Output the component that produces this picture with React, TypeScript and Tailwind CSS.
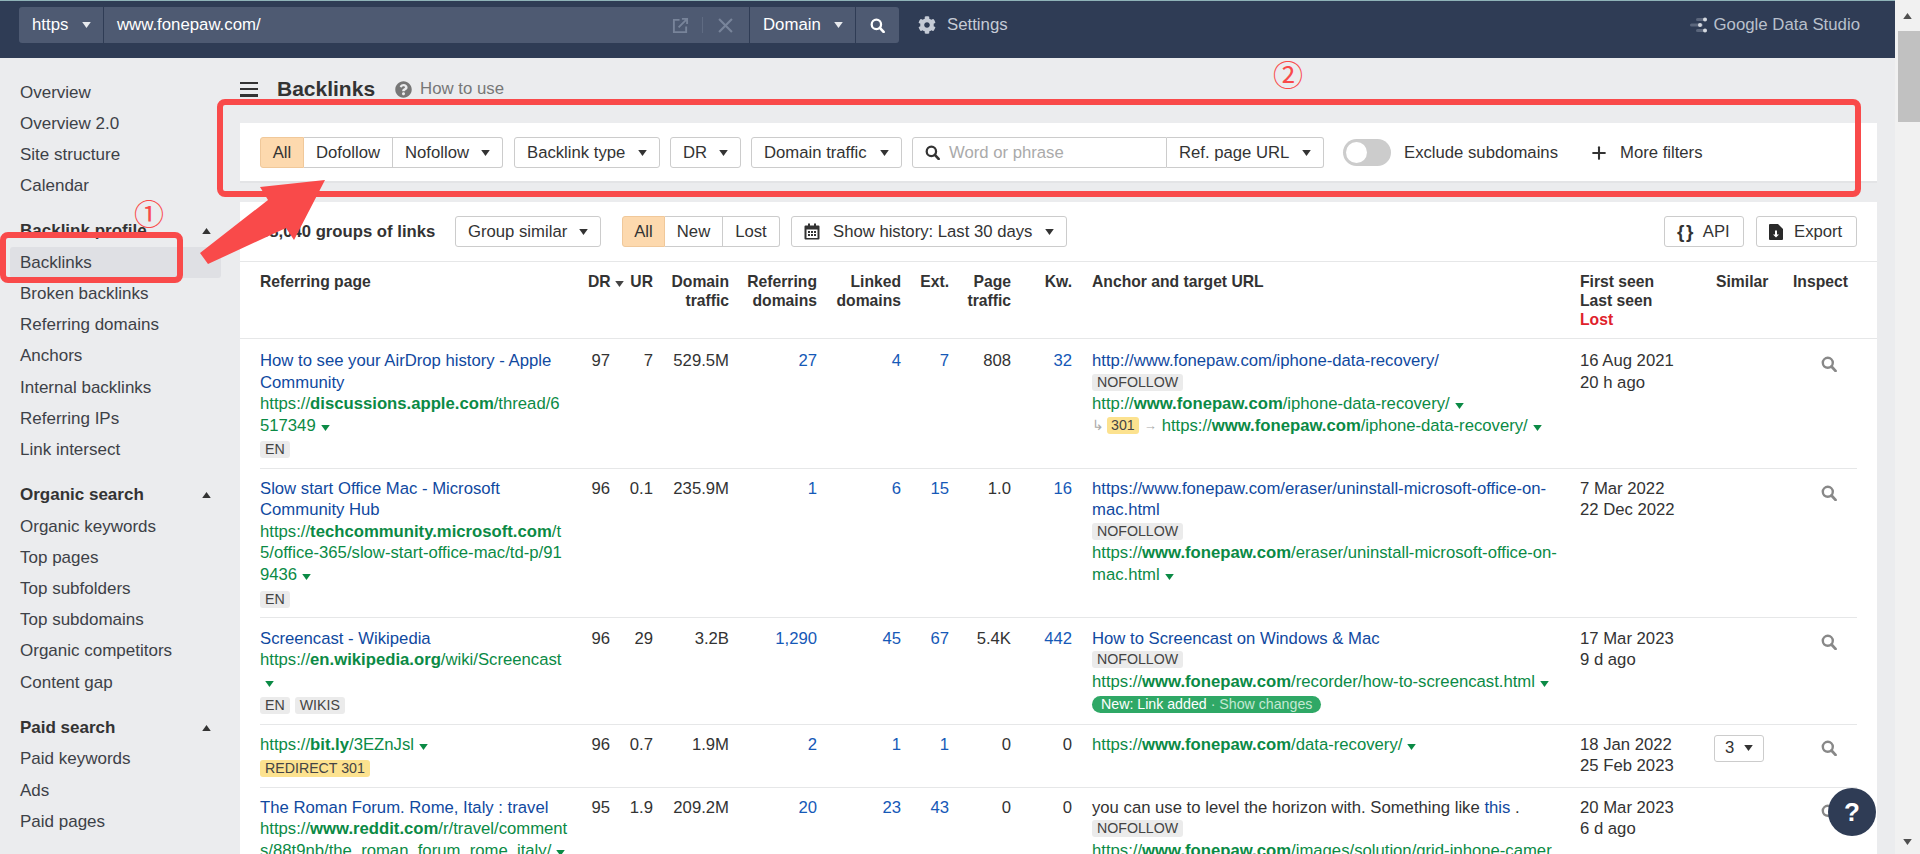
import type { ReactNode } from 'react'
import { FaCog, FaQuestionCircle } from 'react-icons/fa'
import { Plus } from 'lucide-react'

function Caret({ className = 'text-[#333]' }: { className?: string }) {
  return (
    <svg viewBox="0 0 10 7" className={`inline-block w-[9px] h-[6px] shrink-0 ${className}`}>
      <path d="M0 0h10L5 7z" fill="currentColor" />
    </svg>
  )
}

function SearchIcon({ className = '' }: { className?: string }) {
  return (
    <svg viewBox="0 0 16 16" className={className} fill="none" stroke="currentColor">
      <circle cx="6.8" cy="6.8" r="5" strokeWidth="2.4" />
      <path d="M10.5 10.5l4 4.4" strokeWidth="2.8" strokeLinecap="round" />
    </svg>
  )
}

function Btn({ w, children, className = '' }: { w: string; children: ReactNode; className?: string }) {
  return (
    <div className={`${w} h-[31px] flex items-center justify-between px-3 border border-[#ccc] rounded-[3px] bg-white shrink-0 ${className}`}>
      {children}
    </div>
  )
}

function Tag({ children, className = 'bg-[#ebebeb] text-[#444]' }: { children: ReactNode; className?: string }) {
  return (
    <span className={`inline-block h-[17px] leading-[17px] px-[5px] rounded-[3px] text-[14.2px] ${className}`}>
      {children}
    </span>
  )
}

function Url({ pre, bold, post }: { pre: string; bold: string; post: string }) {
  return (
    <span className="text-[#0b8a45]">
      {pre}
      <b>{bold}</b>
      {post}
      <Caret className="text-[#0b8a45] ml-[5px] align-[0px]" />
    </span>
  )
}

const blue = 'text-[#10499f]'

function Cols() {
  return (
    <colgroup>
      <col className="w-[320px]" />
      <col className="w-[44px]" />
      <col className="w-[29px]" />
      <col className="w-[76px]" />
      <col className="w-[88px]" />
      <col className="w-[84px]" />
      <col className="w-[48px]" />
      <col className="w-[62px]" />
      <col className="w-[61px]" />
      <col className="w-[508px]" />
      <col className="w-[136px]" />
      <col className="w-[77px]" />
      <col className="w-[64px]" />
    </colgroup>
  )
}

type Row = {
  h: string
  pt: string
  ipt: string
  page: ReactNode
  dr: string
  nums: [string, boolean][]
  anchor: ReactNode
  first: string
  last: string
  similar?: boolean
}

const rows: Row[] = [
  {
    h: 'h-[129px]',
    pt: 'pt-[11px]',
    ipt: 'pt-[17px]',
    page: (
      <>
        <div className={blue}>How to see your AirDrop history - Apple Community</div>
        <div className="break-all"><Url pre="https://" bold="discussions.apple.com" post="/thread/6517349" /></div>
        <div className="mt-[5px] leading-[17px] flex"><Tag>EN</Tag></div>
      </>
    ),
    dr: '97',
    nums: [['7', false], ['529.5M', false], ['27', true], ['4', true], ['7', true], ['808', false], ['32', true]],
    anchor: (
      <>
        <div className={blue}>http://www.fonepaw.com/iphone-data-recovery/</div>
        <div className="flex h-[21.6px] items-center"><Tag>NOFOLLOW</Tag></div>
        <Url pre="http://" bold="www.fonepaw.com" post="/iphone-data-recovery/" />
        <div className="flex items-center">
          <span className="text-[#aaa] text-[14px] w-[15px]">↳</span>
          <Tag className="bg-[#fce28f] text-[#444] !px-[4px]">301</Tag>
          <span className="text-[#aaa] text-[13px] mx-[5px]">→</span>
          <Url pre="https://" bold="www.fonepaw.com" post="/iphone-data-recovery/" />
        </div>
      </>
    ),
    first: '16 Aug 2021',
    last: '20 h ago',
  },
  {
    h: 'h-[149px]',
    pt: 'pt-[9px]',
    ipt: 'pt-[16px]',
    page: (
      <>
        <div className={blue}>Slow start Office Mac - Microsoft Community Hub</div>
        <div className="break-all"><Url pre="https://" bold="techcommunity.microsoft.com" post="/t5/office-365/slow-start-office-mac/td-p/919436" /></div>
        <div className="mt-[6px] leading-[17px] flex"><Tag>EN</Tag></div>
      </>
    ),
    dr: '96',
    nums: [['0.1', false], ['235.9M', false], ['1', true], ['6', true], ['15', true], ['1.0', false], ['16', true]],
    anchor: (
      <>
        <div className={blue}>https://www.fonepaw.com/eraser/uninstall-microsoft-office-on-mac.html</div>
        <div className="flex h-[21.6px] items-center"><Tag>NOFOLLOW</Tag></div>
        <Url pre="https://" bold="www.fonepaw.com" post="/eraser/uninstall-microsoft-office-on-mac.html" />
      </>
    ),
    first: '7 Mar 2022',
    last: '22 Dec 2022',
  },
  {
    h: 'h-[107px]',
    pt: 'pt-[10px]',
    ipt: 'pt-[16px]',
    page: (
      <>
        <div className={blue}>Screencast - Wikipedia</div>
        <div className="break-all"><Url pre="https://" bold="en.wikipedia.org" post="/wiki/Screencast" /></div>
        <div className="mt-[5px] leading-[17px] flex gap-[5px]"><Tag>EN</Tag><Tag>WIKIS</Tag></div>
      </>
    ),
    dr: '96',
    nums: [['29', false], ['3.2B', false], ['1,290', true], ['45', true], ['67', true], ['5.4K', false], ['442', true]],
    anchor: (
      <>
        <div className={blue}>How to Screencast on Windows &amp; Mac</div>
        <div className="flex h-[21.6px] items-center"><Tag>NOFOLLOW</Tag></div>
        <Url pre="https://" bold="www.fonepaw.com" post="/recorder/how-to-screencast.html" />
        <div className="mt-[4px] flex">
          <span className="h-[17px] leading-[17px] px-[9px] rounded-full bg-[#2fa866] text-white text-[14.2px]">
            New: Link added <span className="text-[#c4e8d3]">· Show changes</span>
          </span>
        </div>
      </>
    ),
    first: '17 Mar 2023',
    last: '9 d ago',
  },
  {
    h: 'h-[63px]',
    pt: 'pt-[9px]',
    ipt: 'pt-[15px]',
    page: (
      <>
        <div className="break-all"><Url pre="https://" bold="bit.ly" post="/3EZnJsl" /></div>
        <div className="mt-[5px] leading-[17px] flex"><Tag className="bg-[#fce28f] text-[#444]">REDIRECT 301</Tag></div>
      </>
    ),
    dr: '96',
    nums: [['0.7', false], ['1.9M', false], ['2', true], ['1', true], ['1', true], ['0', false], ['0', false]],
    anchor: <Url pre="https://" bold="www.fonepaw.com" post="/data-recovery/" />,
    first: '18 Jan 2022',
    last: '25 Feb 2023',
    similar: true,
  },
  {
    h: 'h-[120px]',
    pt: 'pt-[9px]',
    ipt: 'pt-[16px]',
    page: (
      <>
        <div className={blue}>The Roman Forum. Rome, Italy : travel</div>
        <div className="break-all"><Url pre="https://" bold="www.reddit.com" post="/r/travel/comments/88t9nb/the_roman_forum_rome_italy/" /></div>
      </>
    ),
    dr: '95',
    nums: [['1.9', false], ['209.2M', false], ['20', true], ['23', true], ['43', true], ['0', false], ['0', false]],
    anchor: (
      <>
        <div>you can use to level the horizon with. Something like <span className={blue}>this</span> .</div>
        <div className="flex h-[21.6px] items-center"><Tag>NOFOLLOW</Tag></div>
        <div className="break-all pr-[12px]"><Url pre="https://" bold="www.fonepaw.com" post="/images/solution/grid-iphone-camera.jpg" /></div>
      </>
    ),
    first: '20 Mar 2023',
    last: '6 d ago',
  },
]

const menu: { title?: string; items: string[] }[] = [
  { items: ['Overview', 'Overview 2.0', 'Site structure', 'Calendar'] },
  {
    title: 'Backlink profile',
    items: ['Backlinks', 'Broken backlinks', 'Referring domains', 'Anchors', 'Internal backlinks', 'Referring IPs', 'Link intersect'],
  },
  {
    title: 'Organic search',
    items: ['Organic keywords', 'Top pages', 'Top subfolders', 'Top subdomains', 'Organic competitors', 'Content gap'],
  },
  { title: 'Paid search', items: ['Paid keywords', 'Ads', 'Paid pages'] },
]

function Sidebar() {
  return (
    <nav className="w-[240px] shrink-0 pt-[18.5px] pl-[10px] pr-[19px] text-[17px] text-[#3d4147]">
      {menu.map((group, i) => (
        <div key={i} className={i ? 'mt-[14.4px]' : ''}>
          {group.title && (
            <div className="h-[31.2px] flex items-center justify-between px-[10px] font-bold text-[#333]">
              {group.title}
              <Caret className="text-[#333] rotate-180 mr-0" />
            </div>
          )}
          {group.items.map((item) => (
            <div
              key={item}
              className={`h-[31.2px] leading-[31px] px-[10px] rounded-[3px] ${item === 'Backlinks' ? 'bg-[#dfe0e4]' : ''}`}
            >
              {item}
            </div>
          ))}
        </div>
      ))}
    </nav>
  )
}

function TopBar() {
  return (
    <header className="h-[58px] shrink-0 bg-[#2f3c55] border-t border-[#8fb3b8] flex items-start pl-[19px] pr-[35px] pt-[6px] text-[16.8px]">
      <div className="flex h-[36px] w-[880px] rounded-[3px] overflow-hidden text-white bg-[#2f3c55] gap-[1px]">
        <div className="w-[84px] bg-[#4e5a72] flex items-center justify-between pl-[13px] pr-[12px]">
          https <Caret className="text-[#e8eaee]" />
        </div>
        <div className="flex-1 bg-[#4e5a72] flex items-center pl-[13px] pr-[16px]">
          <span className="flex-1">www.fonepaw.com/</span>
          <svg viewBox="0 0 18 18" className="w-[17px] h-[17px] text-[#78849a]" fill="none" stroke="currentColor" strokeWidth="2">
            <path d="M8 3H2v13h13v-6M7 11L16 2M10.5 2H16v5.5" />
          </svg>
          <span className="w-[1px] h-[16px] bg-[#5f6b82] ml-[13px] mr-[15px]" />
          <svg viewBox="0 0 14 14" className="w-[15px] h-[15px] text-[#78849a]" fill="none" stroke="currentColor" strokeWidth="2">
            <path d="M1 1l12 12M13 1L1 13" />
          </svg>
        </div>
        <div className="w-[105px] bg-[#4e5a72] flex items-center justify-between pl-[13px] pr-[12px]">
          Domain <Caret className="text-[#e8eaee]" />
        </div>
        <div className="w-[43px] bg-[#4e5a72] flex items-center justify-center">
          <SearchIcon className="w-[15px] h-[15px] text-white" />
        </div>
      </div>
      <div className="h-[36px] flex items-center ml-[19px] gap-[11px] text-[#c5cbd6]">
        <FaCog className="w-[18px] h-[18px]" />
        Settings
      </div>
      <div className="h-[36px] flex items-center ml-auto gap-[7px] text-[#b9c0cc]">
        <svg viewBox="0 0 17 16" className="w-[17px] h-[16px]">
          <rect x="6" y="1" width="11" height="3" rx="1.5" fill="#5b667c" />
          <circle cx="15" cy="2.5" r="2" fill="#d5d9e0" />
          <rect x="0" y="6.5" width="13" height="3" rx="1.5" fill="#5b667c" />
          <circle cx="10" cy="8" r="2" fill="#d5d9e0" />
          <rect x="6" y="12" width="11" height="3" rx="1.5" fill="#5b667c" />
          <circle cx="15" cy="13.5" r="2" fill="#d5d9e0" />
        </svg>
        Google Data Studio
      </div>
    </header>
  )
}

function FilterPanel() {
  return (
    <section className="h-[60px] bg-white border-b-2 border-[#e3e4e6] flex items-center pl-[20px] pt-[1px] text-[16.7px] text-[#333]">
      <div className="flex items-center">
        <div className="w-[44px] h-[31px] flex items-center justify-center bg-[#fdd9ae] border border-[#f0c89a] rounded-l-[3px]">All</div>
        <div className="w-[89px] h-[31px] flex items-center justify-center border-y border-r border-[#ccc]">Dofollow</div>
        <div className="w-[110px] h-[31px] flex items-center justify-between px-3 border-y border-r border-[#ccc] rounded-r-[3px]">
          Nofollow <Caret />
        </div>
      </div>
      <Btn w="w-[146px]" className="ml-[11px]">Backlink type <Caret /></Btn>
      <Btn w="w-[71px]" className="ml-[10px]">DR <Caret /></Btn>
      <Btn w="w-[151px]" className="ml-[10px]">Domain traffic <Caret /></Btn>
      <div className="ml-[10px] flex">
        <div className="w-[255px] h-[31px] flex items-center pl-[12px] border border-[#ccc] rounded-l-[3px] text-[#aaa]">
          <SearchIcon className="w-[15px] h-[15px] text-[#333] mr-[9px]" />
          Word or phrase
        </div>
        <div className="w-[157px] h-[31px] flex items-center justify-between px-3 border-y border-r border-[#ccc] rounded-r-[3px]">
          Ref. page URL <Caret />
        </div>
      </div>
      <div className="ml-[19px] w-[48px] h-[27px] rounded-full bg-[#ccc] flex items-center pl-[3px]">
        <span className="w-[21px] h-[21px] rounded-full bg-white" />
      </div>
      <span className="ml-[13px]">Exclude subdomains</span>
      <Plus className="ml-[31px] w-[20px] h-[20px] text-[#333]" strokeWidth={2.5} />
      <span className="ml-[11px]">More filters</span>
    </section>
  )
}

function Toolbar() {
  return (
    <div className="h-[60px] border-b border-[#e6e7e8] flex items-start pt-[14px] px-[20px] text-[16.7px] text-[#333]">
      <b className="w-[195px] h-[31px] leading-[31px] shrink-0">38,040 groups of links</b>
      <Btn w="w-[146px]">Group similar <Caret /></Btn>
      <div className="ml-[21px] flex">
        <div className="w-[43px] h-[31px] flex items-center justify-center bg-[#fdd9ae] border border-[#f0c89a] rounded-l-[3px]">All</div>
        <div className="w-[58px] h-[31px] flex items-center justify-center border-y border-r border-[#ccc]">New</div>
        <div className="w-[57px] h-[31px] flex items-center justify-center border-y border-r border-[#ccc] rounded-r-[3px]">Lost</div>
      </div>
      <Btn w="w-[276px]" className="ml-[11px]">
        <svg viewBox="0 0 16 17" className="w-[16px] h-[17px] text-[#333]">
          <path fill="currentColor" d="M1.500 2.500h2.500V0.500h2v2h4V0.500h2v2h2.500a1 1 0 011 1v12a1 1 0 01-1 1h-13a1 1 0 01-1-1v-12a1 1 0 011-1z" />
          <path fill="#fff" d="M2.500 6.500h11v8.500h-11z" />
          <path fill="currentColor" d="M4 8h2v2H4zM7 8h2v2H7zM10 8h2v2h-2zM4 11h2v2H4zM7 11h2v2H7zM10 11h2v2h-2z" />
        </svg>
        <span className="ml-[13px] flex-1">Show history: Last 30 days</span>
        <Caret />
      </Btn>
      <div className="ml-auto flex gap-[12px]">
        <Btn w="w-[80px]" className="!justify-start">
          <b className="text-[19px] tracking-[1.5px] mr-[8px] leading-none">{'{}'}</b>API
        </Btn>
        <Btn w="w-[101px]" className="!justify-start">
          <svg viewBox="0 0 14 16" className="w-[14px] h-[16px] mr-[11px] shrink-0 text-[#2a2a2a]">
            <path fill="currentColor" d="M1 0h8l5 5v10a1 1 0 01-1 1H1a1 1 0 01-1-1V1a1 1 0 011-1z" />
            <path fill="#fff" d="M6 6.500h2v4h2l-3 3-3-3h2z" />
          </svg>
          Export
        </Btn>
      </div>
    </div>
  )
}

function Th({ children, className = 'text-right' }: { children: ReactNode; className?: string }) {
  return <th className={`align-top font-bold pt-[10px] ${className}`}>{children}</th>
}

function DataTable() {
  return (
    <div className="text-[#333]">
      <div className="border-b border-[#e6e7e8] px-[20px] h-[77px]">
        <table className="table-fixed w-[1597px] text-[15.7px] leading-[19px]">
          <Cols />
          <thead>
            <tr>
              <Th className="text-left">Referring page</Th>
              <Th className="text-left pl-[8px]">
                <span className="whitespace-nowrap">DR <Caret className="text-[#444] align-[0px]" /></span>
              </Th>
              <Th>UR</Th>
              <Th>Domain traffic</Th>
              <Th>Referring domains</Th>
              <Th>Linked domains</Th>
              <Th>Ext.</Th>
              <Th>Page traffic</Th>
              <Th>Kw.</Th>
              <Th className="text-left pl-[20px]">Anchor and target URL</Th>
              <Th className="text-left">
                First seen
                <br />
                Last seen
                <br />
                <span className="text-[#e0212b]">Lost</span>
              </Th>
              <Th className="text-left">Similar</Th>
              <Th className="text-left">Inspect</Th>
            </tr>
          </thead>
        </table>
      </div>
      <div className="px-[20px]">
        <table className="table-fixed w-[1597px] text-[16.7px] leading-[21.6px]">
          <Cols />
          <tbody>
            {rows.map((r, i) => (
              <tr key={i} className={`${r.h} border-b border-[#e6e7e8]`}>
                <td className={`align-top ${r.pt} pr-[11.500px]`}>{r.page}</td>
                <td className={`align-top ${r.pt} text-right pr-[14px]`}>{r.dr}</td>
                {r.nums.map(([v, link], j) => (
                  <td key={j} className={`align-top ${r.pt} text-right ${link ? 'text-[#1659b7]' : ''}`}>{v}</td>
                ))}
                <td className={`align-top ${r.pt} pl-[20px] pr-[10px]`}>{r.anchor}</td>
                <td className={`align-top ${r.pt}`}>
                  {r.first}
                  <br />
                  {r.last}
                </td>
                <td className="align-top pt-[10px]">
                  {r.similar && (
                    <div className="-ml-[2px] w-[50px] h-[27px] flex items-center justify-between px-[10px] border border-[#ccc] rounded-[3px]">
                      3 <Caret />
                    </div>
                  )}
                </td>
                <td className={`align-top ${r.ipt} pl-[28px] text-[#888]`}>
                  <SearchIcon className="w-[16px] h-[16px]" />
                </td>
              </tr>
            ))}
          </tbody>
        </table>
      </div>
    </div>
  )
}

function Scrollbar() {
  return (
    <div className="w-[25px] shrink-0 bg-[#f1f1f1] flex flex-col items-center">
      <div className="h-[31px] flex items-center justify-center">
        <Caret className="text-[#505050] rotate-180" />
      </div>
      <div className="w-[22px] h-[91px] ml-[2px] bg-[#c1c1c1]" />
      <div className="flex-1" />
      <div className="h-[24px] flex items-center justify-center">
        <Caret className="text-[#505050]" />
      </div>
    </div>
  )
}

export default function App() {
  return (
    <div className="relative w-[1920px] h-[854px] overflow-hidden flex bg-[#ebecee] font-['Liberation_Sans',Arial,sans-serif]">
      <div className="flex-1 flex flex-col min-w-0">
        <TopBar />
        <div className="flex flex-1 min-h-0">
          <Sidebar />
          <main className="w-[1637px] shrink-0 flex flex-col">
            <div className="h-[65px] shrink-0 flex items-center pb-[3px]">
              <div className="w-[18px] h-[15px] flex flex-col justify-between">
                <span className="h-[2.500px] bg-[#333]" />
                <span className="h-[2.500px] bg-[#333]" />
                <span className="h-[2.500px] bg-[#333]" />
              </div>
              <h1 className="ml-[19px] text-[21px] font-bold text-[#333]">Backlinks</h1>
              <FaQuestionCircle className="ml-[20px] w-[17px] h-[17px] text-[#777]" />
              <span className="ml-[8px] text-[16.8px] text-[#777]">How to use</span>
            </div>
            <FilterPanel />
            <div className="mt-[19px] flex-1 bg-white overflow-hidden">
              <Toolbar />
              <DataTable />
            </div>
          </main>
        </div>
      </div>
      <Scrollbar />

      {/* annotations drawn on top of the screenshot */}
      <div className="absolute left-[217px] top-[99px] w-[1644px] h-[98px] border-[6px] border-[#f94a4a] rounded-[8px]" />
      <div className="absolute left-0 top-[232px] w-[183px] h-[51px] border-[6px] border-[#f94a4a] rounded-[8px]" />
      <svg className="absolute left-0 top-0 w-[400px] h-[300px] pointer-events-none" viewBox="0 0 400 300">
        <path fill="#f94a4a" d="M325 180L260 187L268 200L200 253L208 264L286 228L294 240z" />
      </svg>
      <span className="absolute left-[134px] top-[194px] text-[30px] leading-[36px] text-[#f94a4a] font-['Noto_Sans_CJK_SC',sans-serif]">①</span>
      <span className="absolute left-[1273px] top-[55px] text-[30px] leading-[36px] text-[#f94a4a] font-['Noto_Sans_CJK_SC',sans-serif]">②</span>

      <div className="absolute left-[1828px] top-[788px] w-[48px] h-[48px] rounded-full bg-[#2f3c55] text-white text-[26px] font-bold flex items-center justify-center">
        ?
      </div>
    </div>
  )
}
